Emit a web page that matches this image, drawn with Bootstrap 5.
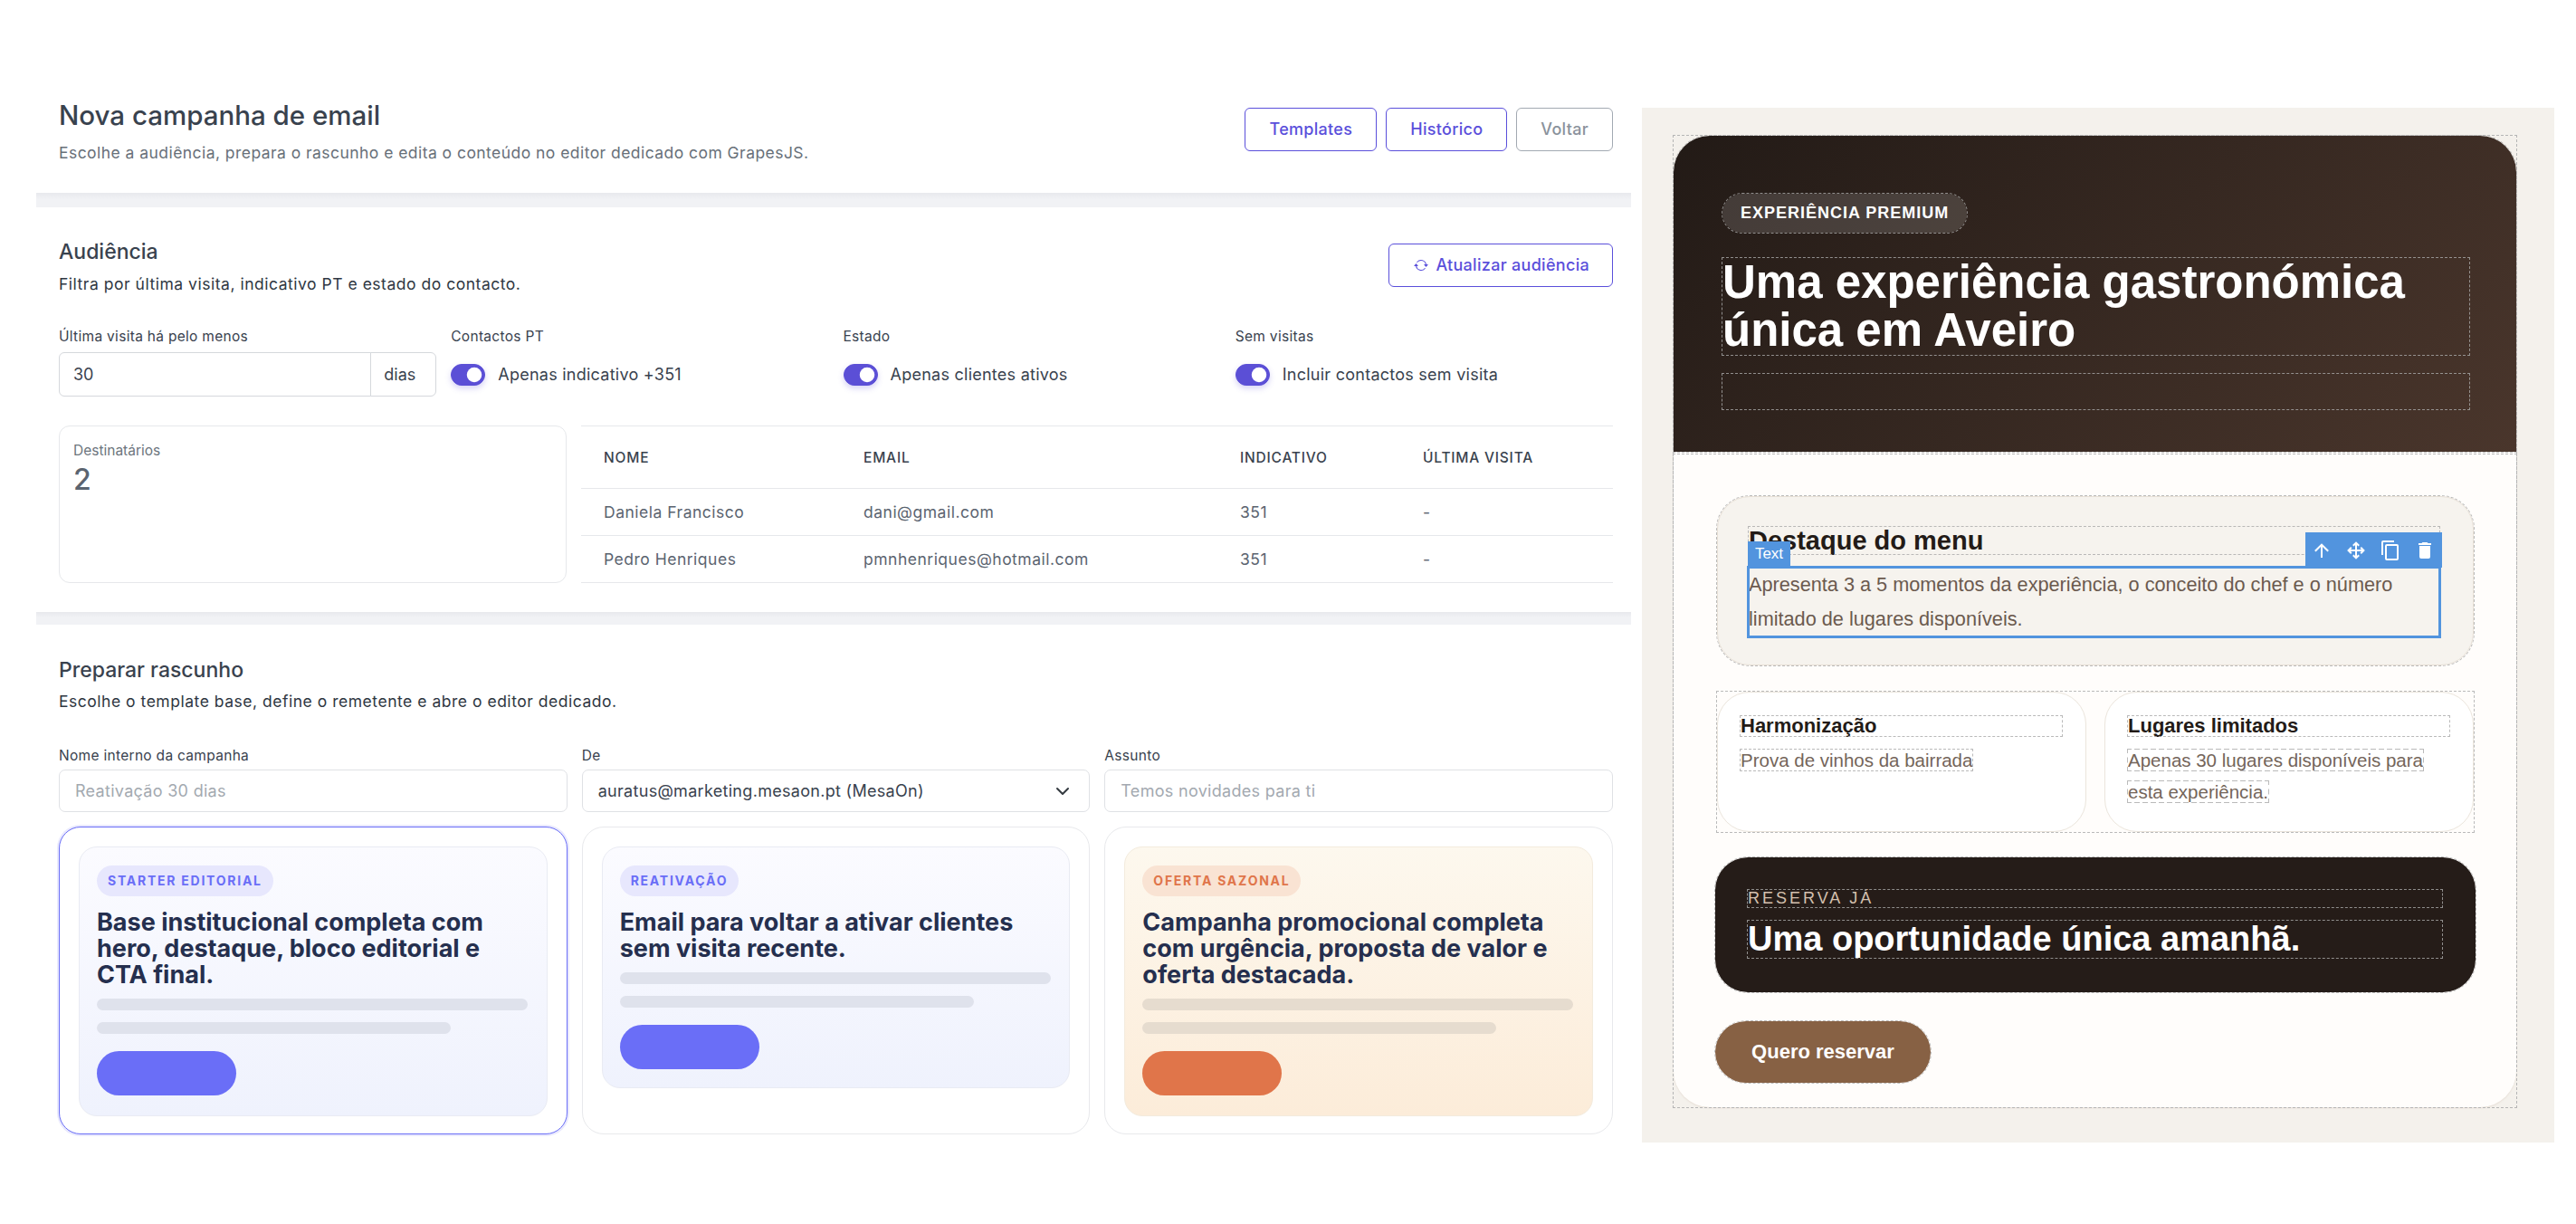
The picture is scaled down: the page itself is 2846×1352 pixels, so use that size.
<!DOCTYPE html>
<html lang="pt">
<head>
  <meta charset="utf-8">
  <title>Nova campanha de email</title>
  <link href="https://cdn.jsdelivr.net/npm/bootstrap@5.3.0/dist/css/bootstrap.min.css" rel="stylesheet">
  <style>
    body { background: #fff; font-family: "Inter", "Liberation Sans", sans-serif; color: #3d4652; overflow: hidden; }
    .shell { width: 2846px; height: 1352px; }
    .leftside { width: 1762px; margin-left: 40px; flex: none; }
    .rightside { width: 1008px; margin-left: 12px; margin-top: 119px; height: 1143px; flex: none; background: #f4f1ec; padding: 31px 42px 0 35px; font-family: "Liberation Sans", Arial, sans-serif; }

    .sec { padding-left: 25px; padding-right: 20px; }
    .sec-top { height: 213px; padding-top: 119px; }
    .sec-aud { height: 447px; padding-top: 40px; }
    .sec-draft { padding-top: 41px; }
    .sep { height: 14px; background: linear-gradient(#e8e9ed, #f1f2f5 45%); }
    .sep-first { height: 16px; }
    .page-title { font-size: 29.5px; font-weight: 500; line-height: 38px; margin: -11px 0 0; color: #39424e; }
    .page-sub { font-size: 17.5px; line-height: 24px; letter-spacing: .45px; margin: 11px 0 0; color: #687079; }
    .sec-title { font-size: 23px; font-weight: 500; line-height: 30px; margin: -6px 0 0; color: #39424e; }
    .sec-sub { font-size: 17.5px; line-height: 24px; letter-spacing: .52px; margin: 9px 0 0; color: #2f3742; }
    .sec-draft .sec-sub { margin-top: 8px; }

    .btn-v { height: 48px; padding: 0 26px; font-size: 18px; font-weight: 500; letter-spacing: .3px; line-height: 46px; color: #5a4fdb; border: 1.5px solid #5a4fdb; border-radius: 6px; background: #fff; }
    .btn-g { color: #8a929c; border-color: #a2a9b2; }
    .btn-refresh { padding: 0 25px 0 27px; display: flex; align-items: center; gap: 8px; }
    .btn-row { gap: 10px; }
    .lbl { font-size: 15.5px; line-height: 22px; letter-spacing: .3px; margin-bottom: 6px; color: #39424e; display: block; }
    .filters { margin-top: 35px; }
    .fcol { flex: 1 1 0; }
    .fgap { gap: 16px; }
    .grp { height: 49px; }
    .grp .form-control, .grp .input-group-text { font-size: 18px; color: #39424e; background: #fff; border-color: #d5d8dc; }
    .grp .form-control { padding-left: 15px; }
    .grp .input-group-text { padding: 0 14px; width: 73px; }
    .swt { height: 49px; padding: 0; margin: 0; gap: 14px; }
    .swt .form-check-input { width: 38px; height: 24px; margin: 0; float: none; background-color: #5b4fd6; border-color: #5b4fd6; box-shadow: 0 3px 6px rgba(91,79,214,.25); }
    .swt .form-check-label { font-size: 18px; letter-spacing: .25px; color: #39424e; }

    .summary-row { margin-top: 32px; height: 174px; gap: 16px; }
    .stat { width: 561px; flex: none; border: 1px solid #e6e8eb; border-radius: 12px; padding: 16px 15px; }
    .stat-l { font-size: 15.5px; line-height: 22px; color: #6c757d; }
    .stat-v { font-size: 32px; line-height: 38px; color: #5b6470; font-weight: 500; margin-top: 2px; }
    .tbl { width: 1140px; flex: none; margin: 0; table-layout: fixed; border-top: 1px solid #e6e8eb; }
    .tbl th, .tbl td { padding: 2px 25px 0; vertical-align: middle; border-color: #e6e8eb; color: #5b6470; font-size: 17.5px; font-weight: 400; letter-spacing: .5px; }
    .tbl th { height: 69px; font-size: 15.5px; font-weight: 500; color: #39424e; letter-spacing: .8px; }
    .tbl td { height: 52px; }

    .draft-fields { margin-top: 37px; gap: 16px; }
    .dcol { flex: 1 1 0; }
    .dcol .lbl { margin-bottom: 4px; }
    .fld { height: 47px; font-size: 18px; letter-spacing: .3px; color: #39424e; border-color: #dfe1e5; border-radius: 7px; padding: 0 17px; }
    .fld::placeholder { color: #a3a9b0; }
    .form-select.fld { background-size: 20px 16px; background-position: right 19px center; }

    .tpl-row { margin-top: 16px; gap: 16px; align-items: flex-start; }
    .tpl { flex: 1 1 0; height: 340px; border: 1px solid #e8e9ec; border-radius: 24px; padding: 21px; background: #fff; }
    .tpl-on { border-color: #6a6ef7; box-shadow: 0 0 0 2px #e9e9fd; }
    .tpl-in { border: 1px solid #e9ebf3; border-radius: 20px; padding: 20px 19px 0; height: 298px; background: linear-gradient(#fbfbff, #eff2fd); }
    .tpl-short { height: 267px; }
    .tpl-warm { background: linear-gradient(#fdf8ee, #fcecd9); border-color: #f3ebdd; }
    .tpl-tag { display: inline-block; height: 34px; line-height: 34px; padding: 0 12px; border-radius: 17px; background: #e7e7fd; color: #6a6ef7; font-size: 14px; font-weight: 700; letter-spacing: 1.75px; }
    .tpl-warm .tpl-tag { background: #f9e3d3; color: #e0754a; }
    .tpl-h { font-size: 27px; line-height: 29px; font-weight: 700; color: #252f4e; margin: 14px 0 0; }
    .bar1, .bar2 { height: 13px; border-radius: 7px; background: #dfe2ec; margin-top: 13px; }
    .bar1 { margin-top: 12px; width: 476px; }
    .bar2 { width: 391px; }
    .tpl-warm .bar1, .tpl-warm .bar2 { background: #e6dccf; }
    .fake-btn { width: 154px; height: 49px; border-radius: 25px; background: #6a6ef7; margin-top: 19px; }
    .tpl-warm .fake-btn { background: #e0754a; }

    .mail-wrap { width: 931px; height: 1073px; outline: 1px dashed #b5b5b5; }
    .mail { height: 1073px; background: #fffdfb; border-radius: 40px; box-shadow: 0 1px 2px #e6ded5; }
    .dash { outline: 1px dashed rgba(170,170,170,.8); }
    .hero { height: 349px; border-radius: 40px 40px 0 0; padding: 64px 52px 0 54px; background: linear-gradient(135deg, #221a16, #4a362c); }
    .hero-tag { display: inline-block; height: 43px; line-height: 42px; padding: 0 20px; border-radius: 22px; background: rgba(255,255,255,.14); color: #fff; font-size: 18px; font-weight: 700; letter-spacing: 1px; }
    .hero-h { font-size: 51px; line-height: 53px; font-weight: 700; color: #fff; margin: 28px 0 0; height: 107px; }
    .hero-sub { height: 39px; margin-top: 21px; }
    .mail-body { height: 721px; margin-top: 3px; padding: 46px 47px 0 48px; }
    .hl { height: 187px; border: 1px solid #e8e0d6; border-radius: 36px; background: #f6f3ee; padding: 33px 37px 0 34px; position: relative; }
    .hl-h { font-size: 29px; line-height: 30px; font-weight: 700; color: #231b17; margin: 0; height: 30px; }
    .hl-p { font-size: 21.7px; line-height: 38px; color: #6b5a4e; margin: 15px 0 0; height: 76px; }
    .sel { outline: 3px solid #5294de; outline-offset: -1px; }
    .sel-tag { position: absolute; left: 33px; top: 49px; width: 47px; height: 28px; background: #5294de; color: #fff; font-size: 17px; line-height: 28px; text-align: center; }
    .sel-bar { position: absolute; right: 34px; top: 39px; width: 151px; height: 39px; background: #5294de; display: flex; align-items: center; gap: 14px; padding-left: 6px; }
    .sel-bar svg { width: 24px; height: 24px; fill: #fff; flex: none; }
    .duo { margin-top: 29px; gap: 20px; }
    .mini { width: 408px; height: 155px; border: 1px solid #ebe5dc; border-radius: 36px; background: #fff; padding: 26px 26px 0 25px; flex: none; }
    .mini-h { font-size: 22px; line-height: 22px; font-weight: 700; color: #231b17; margin: 0; }
    .mini-p { font-size: 20.5px; line-height: 35px; color: #74655a; margin: 9px 0 0; }
    .mini-p span { outline: 1px dashed rgba(170,170,170,.8); }
    .cta { height: 149px; margin: 28px -2px 0; border-radius: 36px; background: #251c18; padding: 36px 37px 0 36px; }
    .cta-k { font-size: 18px; line-height: 19px; letter-spacing: 3px; color: #d4c0ae; margin: 0; }
    .cta-h { font-size: 38px; line-height: 41px; font-weight: 700; color: #fff; margin: 15px 0 0; }
    .cta-btn { display: inline-block; width: 238px; height: 68px; margin: 32px 0 0 -2px; border-radius: 34px; background: #876144; color: #fff; font-size: 22px; font-weight: 700; line-height: 68px; text-align: center; text-decoration: none; }
  </style>
</head>
<body>
<div class="shell d-flex">
  <div class="leftside">
    <div class="sec sec-top d-flex justify-content-between align-items-start">
      <div>
        <h1 class="page-title">Nova campanha de email</h1>
        <p class="page-sub">Escolhe a audiência, prepara o rascunho e edita o conteúdo no editor dedicado com GrapesJS.</p>
      </div>
      <div class="d-flex btn-row">
        <a class="btn btn-v">Templates</a>
        <a class="btn btn-v">Histórico</a>
        <a class="btn btn-v btn-g">Voltar</a>
      </div>
    </div>
    <div class="sep sep-first"></div>

    <div class="sec sec-aud">
      <div class="d-flex justify-content-between align-items-start">
        <div>
          <h2 class="sec-title">Audiência</h2>
          <p class="sec-sub">Filtra por última visita, indicativo PT e estado do contacto.</p>
        </div>
        <a class="btn btn-v btn-refresh"><svg width="16" height="16" viewBox="0 0 16 16" fill="#5a4fdb"><path d="M11.534 7h3.932a.25.25 0 0 1 .192.41l-1.966 2.36a.25.25 0 0 1-.384 0l-1.966-2.36a.25.25 0 0 1 .192-.41zm-11 2h3.932a.25.25 0 0 0 .192-.41L2.692 6.23a.25.25 0 0 0-.384 0L.342 8.59A.25.25 0 0 0 .534 9z"/><path d="M8 3c-1.552 0-2.94.707-3.857 1.818a.5.5 0 1 1-.771-.636A6.002 6.002 0 0 1 13.917 7H12.9A5.002 5.002 0 0 0 8 3zM3.1 9a5.002 5.002 0 0 0 8.757 2.182.5.5 0 1 1 .771.636A6.002 6.002 0 0 1 2.083 9H3.1z"/></svg>Atualizar audiência</a>
      </div>

      <div class="filters d-flex fgap">
        <div class="fcol">
          <label class="lbl">Última visita há pelo menos</label>
          <div class="input-group grp">
            <input type="text" class="form-control" value="30">
            <span class="input-group-text">dias</span>
          </div>
        </div>
        <div class="fcol">
          <span class="lbl">Contactos PT</span>
          <div class="form-check form-switch swt d-flex align-items-center">
            <input class="form-check-input" type="checkbox" checked>
            <label class="form-check-label">Apenas indicativo +351</label>
          </div>
        </div>
        <div class="fcol">
          <span class="lbl">Estado</span>
          <div class="form-check form-switch swt d-flex align-items-center">
            <input class="form-check-input" type="checkbox" checked>
            <label class="form-check-label">Apenas clientes ativos</label>
          </div>
        </div>
        <div class="fcol">
          <span class="lbl">Sem visitas</span>
          <div class="form-check form-switch swt d-flex align-items-center">
            <input class="form-check-input" type="checkbox" checked>
            <label class="form-check-label">Incluir contactos sem visita</label>
          </div>
        </div>
      </div>

      <div class="summary-row d-flex">
        <div class="stat">
          <div class="stat-l">Destinatários</div>
          <div class="stat-v">2</div>
        </div>
        <table class="table tbl">
          <colgroup><col style="width:287px"><col style="width:416px"><col style="width:202px"><col></colgroup>
          <thead>
            <tr><th>NOME</th><th>EMAIL</th><th>INDICATIVO</th><th>ÚLTIMA VISITA</th></tr>
          </thead>
          <tbody>
            <tr><td>Daniela Francisco</td><td>dani@gmail.com</td><td>351</td><td>-</td></tr>
            <tr><td>Pedro Henriques</td><td>pmnhenriques@hotmail.com</td><td>351</td><td>-</td></tr>
          </tbody>
        </table>
      </div>
    </div>
    <div class="sep"></div>

    <div class="sec sec-draft">
      <h2 class="sec-title">Preparar rascunho</h2>
      <p class="sec-sub">Escolhe o template base, define o remetente e abre o editor dedicado.</p>

      <div class="draft-fields d-flex">
        <div class="dcol">
          <label class="lbl">Nome interno da campanha</label>
          <input type="text" class="form-control fld" placeholder="Reativação 30 dias">
        </div>
        <div class="dcol">
          <label class="lbl">De</label>
          <select class="form-select fld"><option>auratus@marketing.mesaon.pt (MesaOn)</option></select>
        </div>
        <div class="dcol">
          <label class="lbl">Assunto</label>
          <input type="text" class="form-control fld" placeholder="Temos novidades para ti">
        </div>
      </div>

      <div class="tpl-row d-flex">
        <div class="tpl tpl-on">
          <div class="tpl-in">
            <span class="tpl-tag">STARTER EDITORIAL</span>
            <h3 class="tpl-h">Base institucional completa com hero, destaque, bloco editorial e CTA final.</h3>
            <div class="bar1"></div><div class="bar2"></div>
            <div class="fake-btn"></div>
          </div>
        </div>
        <div class="tpl">
          <div class="tpl-in tpl-short">
            <span class="tpl-tag">REATIVAÇÃO</span>
            <h3 class="tpl-h">Email para voltar a ativar clientes sem visita recente.</h3>
            <div class="bar1"></div><div class="bar2"></div>
            <div class="fake-btn"></div>
          </div>
        </div>
        <div class="tpl">
          <div class="tpl-in tpl-warm">
            <span class="tpl-tag">OFERTA SAZONAL</span>
            <h3 class="tpl-h">Campanha promocional completa com urgência, proposta de valor e oferta destacada.</h3>
            <div class="bar1"></div><div class="bar2"></div>
            <div class="fake-btn"></div>
          </div>
        </div>
      </div>
    </div>
  </div>

  <div class="rightside">
    <div class="mail-wrap">
      <div class="mail">
        <div class="hero dash">
          <span class="hero-tag dash">EXPERIÊNCIA PREMIUM</span>
          <h1 class="hero-h dash">Uma experiência gastronómica única em Aveiro</h1>
          <div class="hero-sub dash"></div>
        </div>
        <div class="mail-body dash">
          <div class="hl dash">
            <h2 class="hl-h dash">Destaque do menu</h2>
            <p class="hl-p sel">Apresenta 3 a 5 momentos da experiência, o conceito do chef e o número limitado de lugares disponíveis.</p>
            <div class="sel-tag">Text</div>
            <div class="sel-bar">
              <svg viewBox="0 0 24 24"><path d="M13,20H11V8L5.5,13.5L4.08,12.08L12,4.16L19.92,12.08L18.5,13.5L13,8V20Z"/></svg>
              <svg viewBox="0 0 24 24"><path d="M13,11H18L16.5,9.5L17.92,8.08L21.84,12L17.92,15.92L16.5,14.5L18,13H13V18L14.5,16.5L15.92,17.92L12,21.84L8.08,17.92L9.5,16.5L11,18V13H6L7.5,14.5L6.08,15.92L2.16,12L6.08,8.08L7.5,9.5L6,11H11V6L9.5,7.5L8.08,6.08L12,2.16L15.92,6.08L14.5,7.5L13,6V11Z"/></svg>
              <svg viewBox="0 0 24 24"><path d="M19,21H8V7H19M19,5H8A2,2 0 0,0 6,7V21A2,2 0 0,0 8,23H19A2,2 0 0,0 21,21V7A2,2 0 0,0 19,5M16,1H4A2,2 0 0,0 2,3V17H4V3H16V1Z"/></svg>
              <svg viewBox="0 0 24 24"><path d="M19,4H15.5L14.5,3H9.500L8.500,4H5V6H19M6,19A2,2 0 0,0 8,21H16A2,2 0 0,0 18,19V7H6V19Z"/></svg>
            </div>
          </div>

          <div class="duo d-flex dash">
            <div class="mini">
              <h3 class="mini-h dash">Harmonização</h3>
              <p class="mini-p"><span>Prova de vinhos da bairrada</span></p>
            </div>
            <div class="mini">
              <h3 class="mini-h dash">Lugares limitados</h3>
              <p class="mini-p"><span>Apenas 30 lugares disponíveis para esta experiência.</span></p>
            </div>
          </div>

          <div class="cta dash">
            <p class="cta-k dash">RESERVA JÁ</p>
            <h2 class="cta-h dash">Uma oportunidade única amanhã.</h2>
          </div>
          <a class="cta-btn dash">Quero reservar</a>
        </div>
      </div>
    </div>
  </div>
</div>
<script src="https://cdn.jsdelivr.net/npm/bootstrap@5.3.0/dist/js/bootstrap.bundle.min.js"></script>
</body>
</html>
